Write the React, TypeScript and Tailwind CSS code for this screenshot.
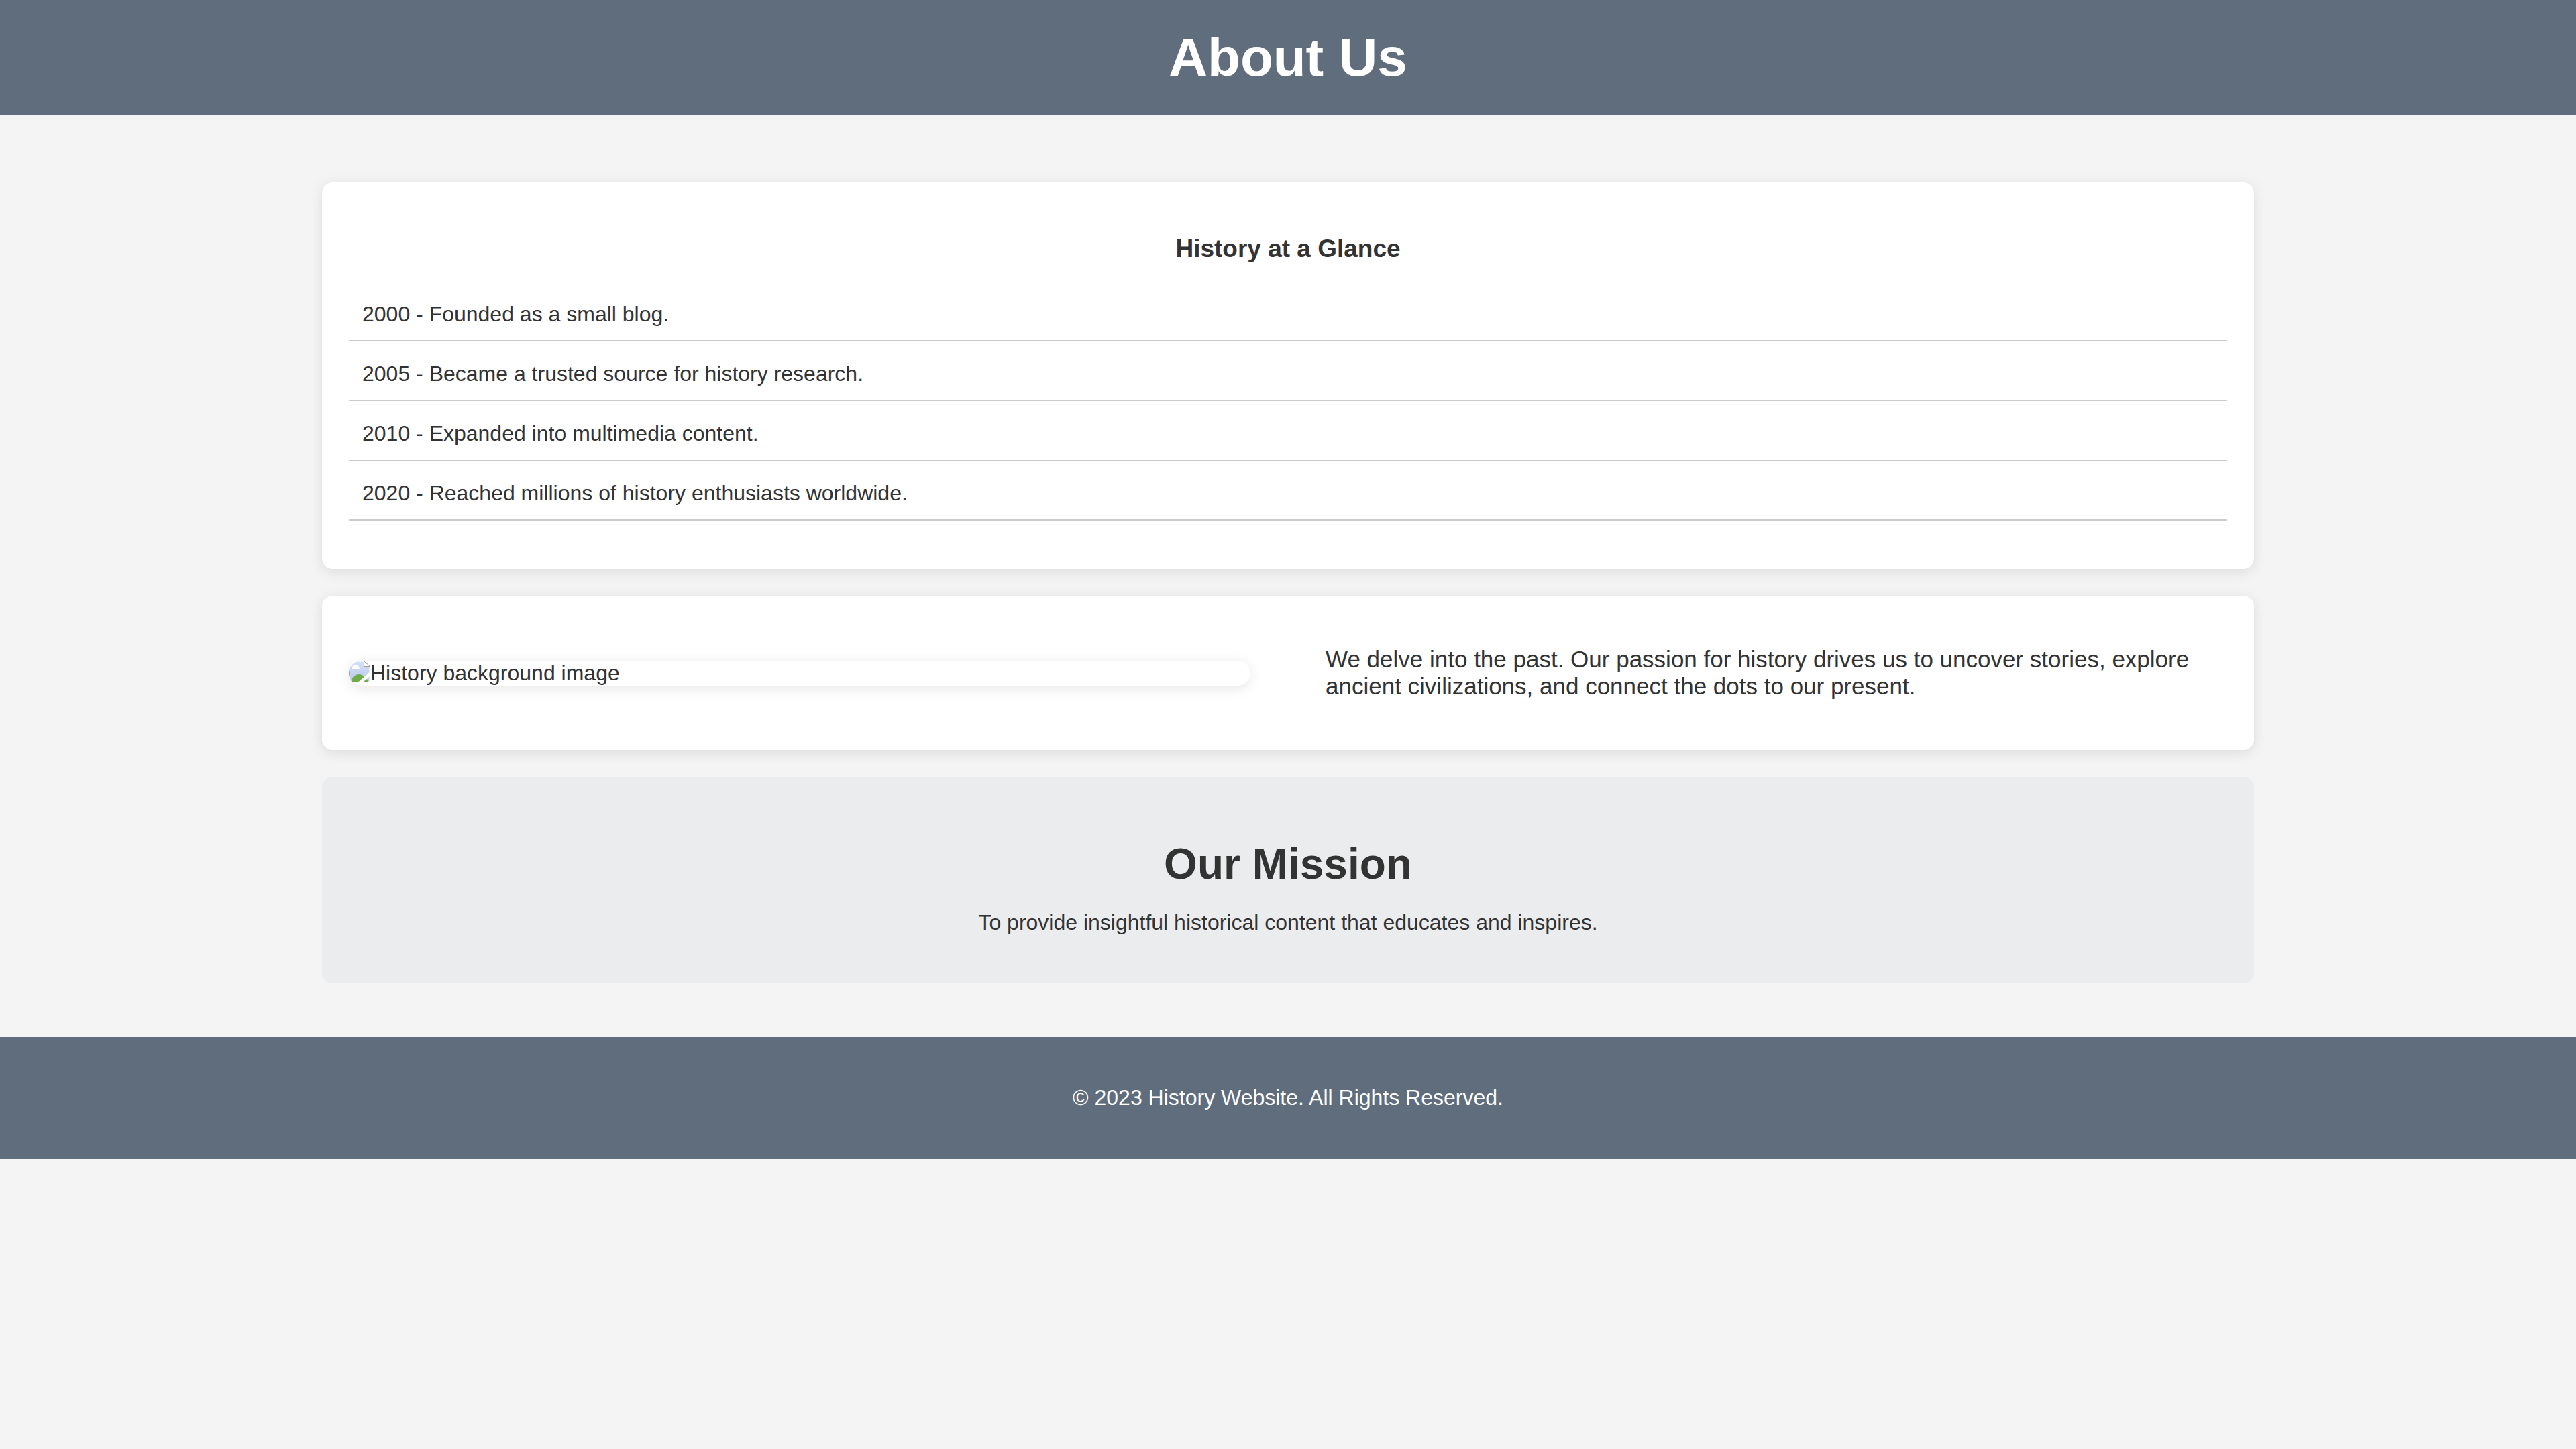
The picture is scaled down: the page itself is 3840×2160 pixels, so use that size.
import React from "react";

const milestones = [
  { year: "2000", text: "Founded as a small blog." },
  { year: "2005", text: "Became a trusted source for history research." },
  { year: "2010", text: "Expanded into multimedia content." },
  { year: "2020", text: "Reached millions of history enthusiasts worldwide." },
];

function MissingImageIcon() {
  return (
    <svg className="h-8 w-8 shrink-0" viewBox="0 0 32 32" aria-hidden="true">
      <defs>
        <linearGradient id="sky" x1="0" y1="0" x2="0" y2="1">
          <stop offset="0" stopColor="#d3e0f8" />
          <stop offset="1" stopColor="#b9c9ea" />
        </linearGradient>
        <clipPath id="page">
          <path d="M0 0H22.5L32 9V32H0Z" />
        </clipPath>
      </defs>
      <g clipPath="url(#page)">
        <rect width="32" height="32" fill="#fff" />
        <rect x="1.5" y="1.5" width="29" height="29" fill="url(#sky)" />
        <path
          d="M5.5 13A2.6 2.6 0 0 1 5.6 8.4A4.6 4.6 0 0 1 13.8 8.2A2.5 2.5 0 0 1 14.3 13Z"
          fill="#fff"
        />
        <path d="M2 31C5 24 9.5 20 15 20S25.5 24 29 31Z" fill="#6fad4a" />
      </g>
      <path d="M0.5 31.5V0.5H22.5L31.5 9V31.5Z" fill="none" stroke="#9b9b9b" />
      <path d="M22.5 0.5V8.5H31.5Z" fill="#fff" stroke="#9b9b9b" />
      <path d="M13.5 32L33 15V22L20.5 32Z" fill="#fff" />
    </svg>
  );
}

export default function App() {
  return (
    <div className="min-h-screen bg-[#f4f4f4] font-['Liberation_Sans',Arial,sans-serif] text-[32px] leading-[37px] text-[#333]">
      <header className="bg-[#606d7c] p-10 text-center text-white">
        <h1 className="text-[80px] leading-[92px] font-bold">About Us</h1>
      </header>

      <main className="mx-auto flex w-3/4 flex-col gap-10 pt-25 pb-20">
        <section className="rounded-2xl bg-white px-10 pt-[77px] pb-[72px] shadow-[0_4px_20px_rgba(0,0,0,0.1)]">
          <h3 className="text-center text-[37px] leading-[43px] font-bold">History at a Glance</h3>
          <ul className="mt-[38px] flex flex-col gap-[10px]">
            {milestones.map((m) => (
              <li key={m.year} className="border-b-2 border-[#ccc] p-5">
                {m.year} - {m.text}
              </li>
            ))}
          </ul>
        </section>

        <section className="flex items-center justify-between rounded-2xl bg-white px-10 py-[75px] shadow-[0_4px_20px_rgba(0,0,0,0.1)]">
          <div className="flex w-[48%] items-start overflow-hidden rounded-full shadow-[0_4px_20px_rgba(0,0,0,0.1)]">
            <MissingImageIcon />
            <span>History background image</span>
          </div>
          <p className="w-[48%] text-[35px] leading-10">
            We delve into the past. Our passion for history drives us to uncover stories, explore
            ancient civilizations, and connect the dots to our present.
          </p>
        </section>

        <section className="rounded-2xl bg-[#ebeced] px-10 pt-[93px] pb-[72px] text-center">
          <h2 className="text-[64px] leading-[74px] font-bold">Our Mission</h2>
          <p className="mt-8">
            To provide insightful historical content that educates and inspires.
          </p>
        </section>
      </main>

      <footer className="bg-[#606d7c] px-10 py-18 text-center text-white">
        <p>© 2023 History Website. All Rights Reserved.</p>
      </footer>
    </div>
  );
}
